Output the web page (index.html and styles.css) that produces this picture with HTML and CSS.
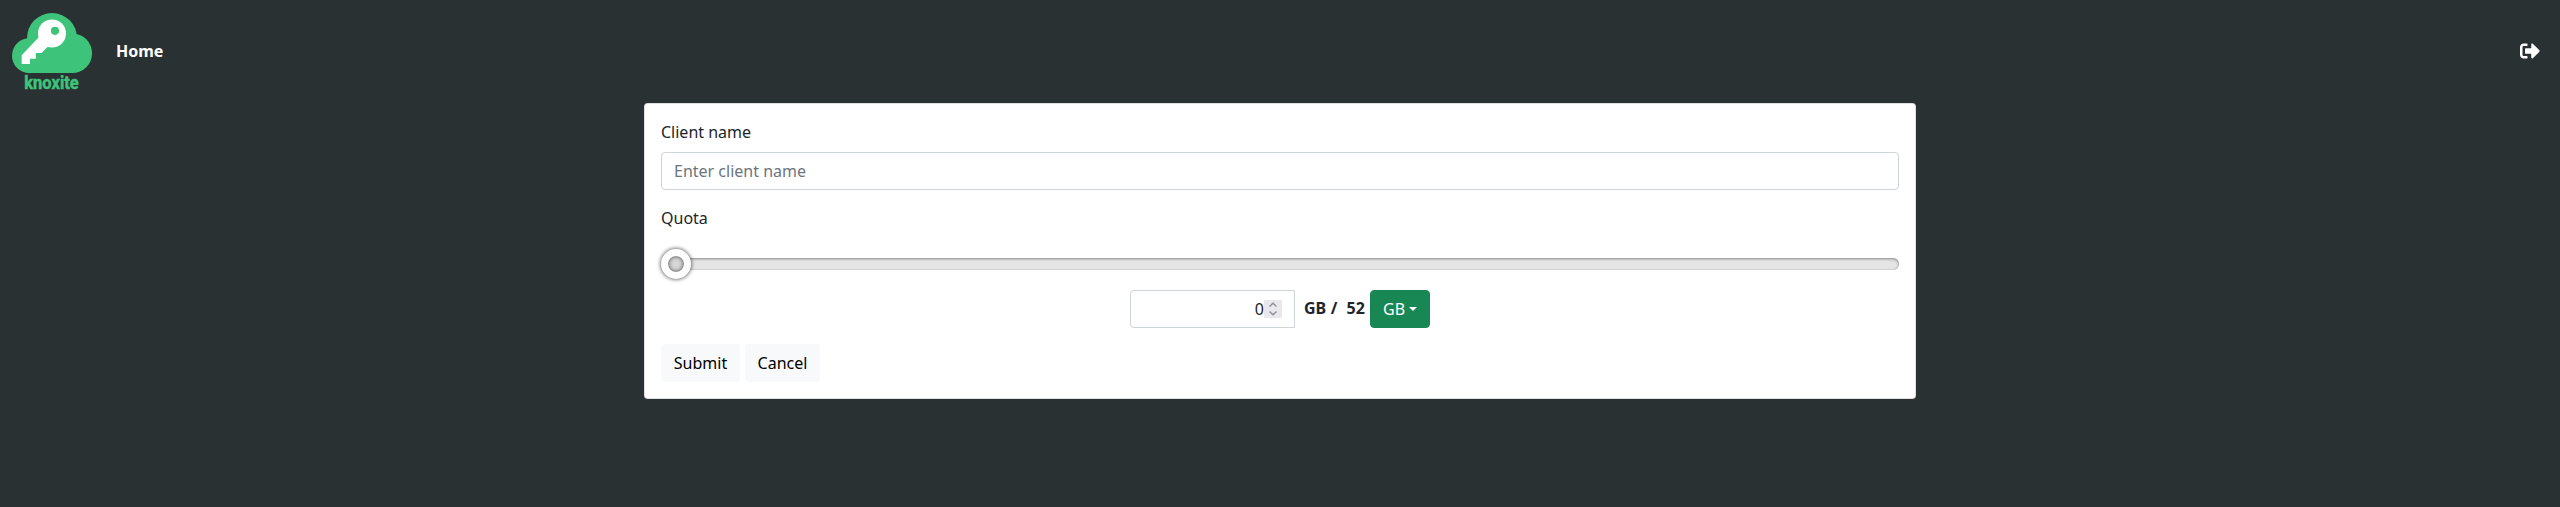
FILE: index.html
```
<!DOCTYPE html>
<html lang="en">
<head>
<meta charset="utf-8">
<title>knoxite</title>
<link rel="stylesheet" href="styles.css">
</head>
<body>
<nav class="navbar">
  <a class="brand" href="#">
    <svg class="logo" width="82" height="84" viewBox="11 10 82 84">
      <g fill="#3ec47a">
        <circle cx="52" cy="38" r="25"/>
        <circle cx="29.5" cy="55.7" r="17.5"/>
        <circle cx="72.3" cy="53.3" r="19.8"/>
        <path d="M29.5 40H72V73.1H29.5z"/>
      </g>
      <path fill="#fff" d="M39 37 21.7 55.300V64H30V58.700H35.800V53H41.500L48.500 46z"/>
      <circle cx="52" cy="33.500" r="14" fill="#fff"/>
      <circle cx="55" cy="30.800" r="4.100" fill="#3ec47a"/>
      <text class="wordmark" x="24.300" y="89.300" textLength="54.500" lengthAdjust="spacingAndGlyphs">knoxite</text>
    </svg>
  </a>
  <a class="nav-link" href="#">Home</a>
  <a class="logout" href="#" aria-label="Log out">
    <svg width="20" height="20" viewBox="0 0 512 512"><path fill="#fff" d="M497 273 329 441c-15 15-41 4.500-41-17v-96H152c-13.300 0-24-10.700-24-24v-96c0-13.300 10.700-24 24-24h136V88c0-21.400 25.900-32 41-17l168 168c9.300 9.400 9.300 24.600 0 34zM192 436v-40c0-6.600-5.400-12-12-12H96c-17.700 0-32-14.300-32-32V160c0-17.700 14.300-32 32-32h84c6.600 0 12-5.400 12-12V76c0-6.600-5.400-12-12-12H96c-53 0-96 43-96 96v192c0 53 43 96 96 96h84c6.600 0 12-5.400 12-12z"/></svg>
  </a>
</nav>
<main class="card">
  <label class="label" for="name">Client name</label>
  <input class="control name" id="name" type="text" placeholder="Enter client name">
  <div class="label">Quota</div>
  <div class="slider"><div class="track"></div><div class="thumb"></div></div>
  <div class="quota">
    <div class="control amount"><span>0</span>
      <span class="spinner"><svg width="18" height="18" viewBox="0 0 18 18" fill="none" stroke="#8f8f9d" stroke-width="1.500"><path d="M5.500 6.500 9 3.300 12.500 6.500M5.500 11.500 9 14.700 12.500 11.500"/></svg></span>
    </div>
    <b class="total">GB /&nbsp; 52</b>
    <button class="btn unit" type="button">GB<i class="caret"></i></button>
  </div>
  <div class="actions">
    <button class="btn submit" type="button">Submit</button>
    <button class="btn cancel" type="button">Cancel</button>
  </div>
</main>
</body>
</html>
```
FILE: styles.css
```
* { box-sizing: border-box; }
body {
  margin: 0;
  background: #2a3132;
  color: #212529;
  font: 16px/24px "Noto Sans", "Liberation Sans", sans-serif;
}
.navbar {
  display: flex;
  align-items: center;
  height: 103px;
  padding: 0 20px 0 11px;
}
.brand { display: flex; }
.logo { display: block; }
.wordmark {
  font: bold 18px Roboto, sans-serif;
  fill: #3ec47a;
  stroke: #3ec47a;
  stroke-width: .5px;
}
.nav-link {
  margin-left: 23px;
  padding-bottom: 2px;
  color: #fff;
  font-weight: 700;
  text-decoration: none;
}
.logout { margin-left: auto; padding-bottom: 2px; display: flex; }
.card {
  width: 1272px;
  height: 296px;
  margin: 0 auto;
  padding: 16px;
  background: #fff;
  border: 1px solid rgba(0, 0, 0, .125);
  border-radius: 4px;
}
.label { display: block; margin-bottom: 8px; }
.control {
  height: 38px;
  padding: 6px 12px;
  border: 1px solid #ced4da;
  border-radius: 4px;
  background: #fff;
  color: #212529;
  font: inherit;
}
.name { display: block; width: 100%; margin-bottom: 16px; }
.name::placeholder { color: #6c757d; opacity: 1; }
.slider {
  position: relative;
  height: 32px;
  margin: 18px 0 10px;
  display: flex;
  align-items: center;
}
.track {
  width: 100%;
  height: 12px;
  border-radius: 6px;
  background: #e5e5e5;
  box-shadow: inset 0 1px 3px rgba(0, 0, 0, .4), inset 0 0 1px rgba(0, 0, 0, .2);
}
.thumb {
  position: absolute;
  left: 0;
  top: 1px;
  width: 30px;
  height: 30px;
  border: 7px solid #fff;
  border-radius: 50%;
  background: #d6d6d6;
  box-shadow: 0 0 4px rgba(0, 0, 0, .8), inset 0 0 4px rgba(0, 0, 0, .7);
}
.quota { display: flex; justify-content: center; height: 38px; }
.amount {
  display: flex;
  justify-content: flex-end;
  align-items: center;
  width: 165px;
  border-radius: 4px 0 0 4px;
}
.spinner { width: 18px; height: 18px; background: #e9e9ed; }
.spinner svg { display: block; }
.total { width: 75px; padding: 6px 0 0 9px; white-space: nowrap; word-spacing: .4px; }
.btn {
  height: 38px;
  padding: 6px 0;
  border: 1px solid #f8f9fa;
  border-radius: 4px;
  background: #f8f9fa;
  color: #000;
  font: inherit;
}
.submit { width: 79px; }
.cancel { width: 75px; }
.unit {
  width: 60px;
  padding-left: 12px;
  display: flex;
  align-items: center;
  background: #198754;
  border-color: #198754;
  color: #fff;
}
.caret {
  margin: 0 0 1px 4px;
  border: 4.8px solid transparent;
  border-top-color: #fff;
  border-bottom: 0;
}
.actions { display: flex; gap: 5px; margin-top: 16px; }
```
